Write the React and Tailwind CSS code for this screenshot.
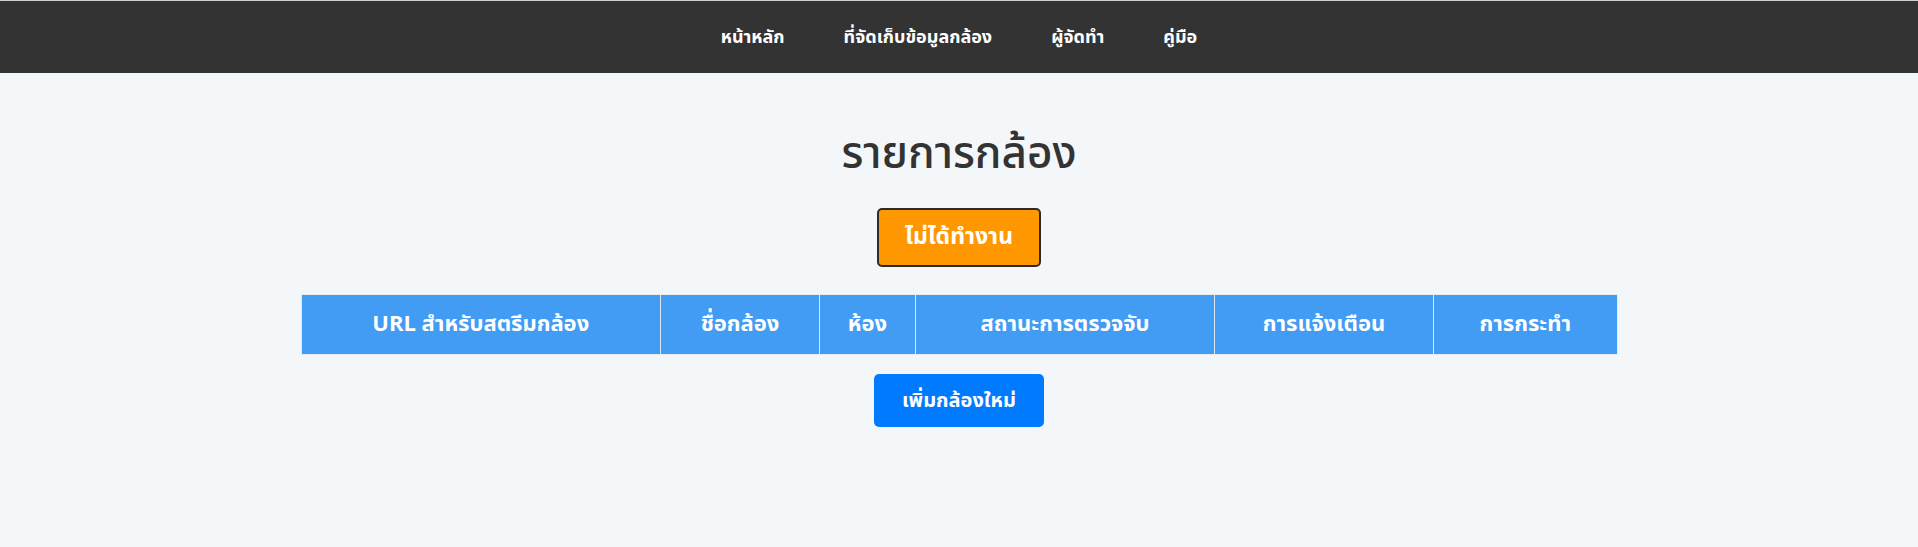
export default function App() {
  const cols = [
    ["URL สำหรับสตรีมกล้อง", "w-[359px]"],
    ["ชื่อกล้อง", "w-[159px]"],
    ["ห้อง", "w-[96px]"],
    ["สถานะการตรวจจับ", "w-[299px]"],
    ["การแจ้งเตือน", "w-[219px]"],
    ["การกระทำ", "w-[183px]"],
  ];
  return (
    <div className="min-h-[547px] bg-[#f4f7fa] font-['Tahoma','Noto_Sans_Thai','Noto_Sans','DejaVu_Sans',sans-serif]">
      <nav className="h-[73px] bg-[#333333] border-t border-[#cfcfcf] flex items-center justify-center gap-[59px]">
        <a className="text-white font-bold text-[18px]">หน้าหลัก</a>
        <a className="text-white font-bold text-[18px]">ที่จัดเก็บข้อมูลกล้อง</a>
        <a className="text-white font-bold text-[18px]">ผู้จัดทำ</a>
        <a className="text-white font-bold text-[18px]">คู่มือ</a>
      </nav>
      <div className="flex flex-col items-center">
        <h1 className="mt-[57px] text-[44px] leading-[50px] text-[#333333] font-medium">รายการกล้อง</h1>
        <button className="mt-[28px] w-[164px] h-[59px] bg-[#ff9800] border-2 border-[#2b2b2b] rounded-[5px] text-white font-bold text-[23px]">
          ไม่ได้ทำงาน
        </button>
        <div className="mt-[27px] border border-[#e6ebf0] p-0">
          <table className="border-collapse">
            <thead>
              <tr className="bg-[#429cf4] h-[59px]">
                {cols.map(([t, w], i) => (
                  <th
                    key={i}
                    className={`${w} text-white font-bold text-[22px] text-center ${i < cols.length - 1 ? "border-r border-[#dbe6f0]" : ""}`}
                  >
                    {t}
                  </th>
                ))}
              </tr>
            </thead>
          </table>
        </div>
        <button className="mt-[19px] w-[170px] h-[53px] bg-[#007bff] rounded-[5px] text-white font-bold text-[20px]">
          เพิ่มกล้องใหม่
        </button>
      </div>
    </div>
  );
}
